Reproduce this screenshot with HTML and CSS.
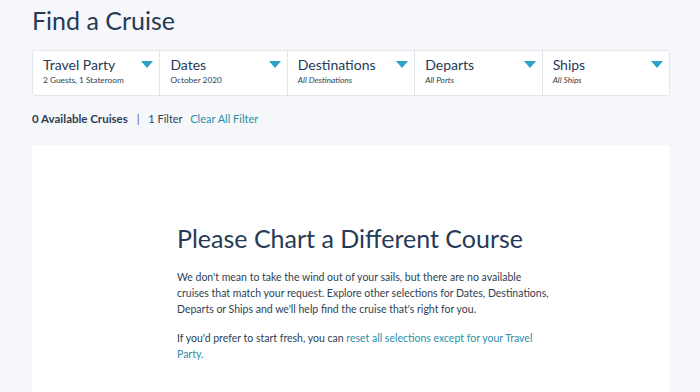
FILE: index.html
```html
<!DOCTYPE html>
<html lang="en">
<head>
  <meta charset="UTF-8">
  <title>Find a Cruise</title>
  <link rel="stylesheet" href="styles.css">
</head>
<body>
  <div class="page">
    <h1 class="title">Find a Cruise</h1>

    <div class="filters">
      <div class="filter">
        <div class="filter-text">
          <div class="filter-label">Travel Party</div>
          <div class="filter-value">2 Guests, 1 Stateroom</div>
        </div>
        <span class="caret"></span>
      </div>
      <div class="filter">
        <div class="filter-text">
          <div class="filter-label">Dates</div>
          <div class="filter-value">October 2020</div>
        </div>
        <span class="caret"></span>
      </div>
      <div class="filter">
        <div class="filter-text">
          <div class="filter-label">Destinations</div>
          <div class="filter-value empty">All Destinations</div>
        </div>
        <span class="caret"></span>
      </div>
      <div class="filter">
        <div class="filter-text">
          <div class="filter-label">Departs</div>
          <div class="filter-value empty">All Ports</div>
        </div>
        <span class="caret"></span>
      </div>
      <div class="filter">
        <div class="filter-text">
          <div class="filter-label">Ships</div>
          <div class="filter-value empty">All Ships</div>
        </div>
        <span class="caret"></span>
      </div>
    </div>

    <div class="summary">
      <strong>0 Available Cruises</strong>
      <span class="sep">|</span>
      <span>1 Filter</span>
      <a class="clear" href="#">Clear All Filter</a>
    </div>

    <div class="results">
      <div class="no-results">
        <h2>Please Chart a Different Course</h2>
        <p>We don't mean to take the wind out of your sails, but there are no available cruises that match your request. Explore other selections for Dates, Destinations, Departs or Ships and we'll help find the cruise that's right for you.</p>
        <p>If you'd prefer to start fresh, you can <a href="#">reset all selections except for your Travel Party.</a></p>
      </div>
    </div>
  </div>
</body>
</html>
```

FILE: styles.css
```css
body {
  margin: 0;
  background-color: #f6f7fb;
  font-family: Lato, "Open Sans", sans-serif;
  color: #253b56;
}

.page {
  padding: 0 30px 0 32px;
}

.title {
  margin: 0;
  padding-top: 5px;
  font-size: 25px;
  font-weight: 400;
  line-height: 30px;
  color: #253b56;
}

/* filter bar */
.filters {
  display: flex;
  margin-top: 15px;
  height: 44px;
  background-color: #fff;
  border: 1px solid #e3e6ec;
  border-radius: 3px;
}
.filter {
  flex: 1;
  display: flex;
  justify-content: space-between;
  padding: 5px 6px 0 10px;
  border-left: 1px solid #e3e6ec;
}
.filter:first-child {
  border-left: none;
}
.filter-label {
  font-size: 14px;
  line-height: 17px;
}
.filter-value {
  margin-top: 2px;
  font-size: 8.3px;
  color: #2f3f52;
}
.filter-value.empty {
  font-style: italic;
}
.caret {
  margin-top: 5px;
  width: 0;
  height: 0;
  border-left: 6px solid transparent;
  border-right: 6px solid transparent;
  border-top: 7px solid #2aa3c6;
}

/* summary row */
.summary {
  margin-top: 16px;
  font-size: 11px;
  color: #2f3f52;
}
.summary strong {
  font-size: 11.5px;
  font-weight: 700;
}
.sep {
  margin: 0 6px;
  color: #555;
}
.clear {
  margin-left: 5px;
  color: #2a8fa8;
  text-decoration: none;
}

/* empty results */
.results {
  margin-top: 20px;
  background-color: #fff;
  min-height: 260px;
}
.no-results {
  width: 372px;
  margin: 0 0 0 145px;
  padding-top: 78px;
}
.no-results h2 {
  margin: 0 0 16px;
  font-size: 25px;
  font-weight: 400;
  line-height: 30px;
  color: #253b56;
}
.no-results p {
  margin: 0 0 13px;
  font-size: 10.5px;
  line-height: 16px;
  color: #2f3f52;
}
.no-results a {
  color: #2a8fa8;
  text-decoration: none;
}
```
